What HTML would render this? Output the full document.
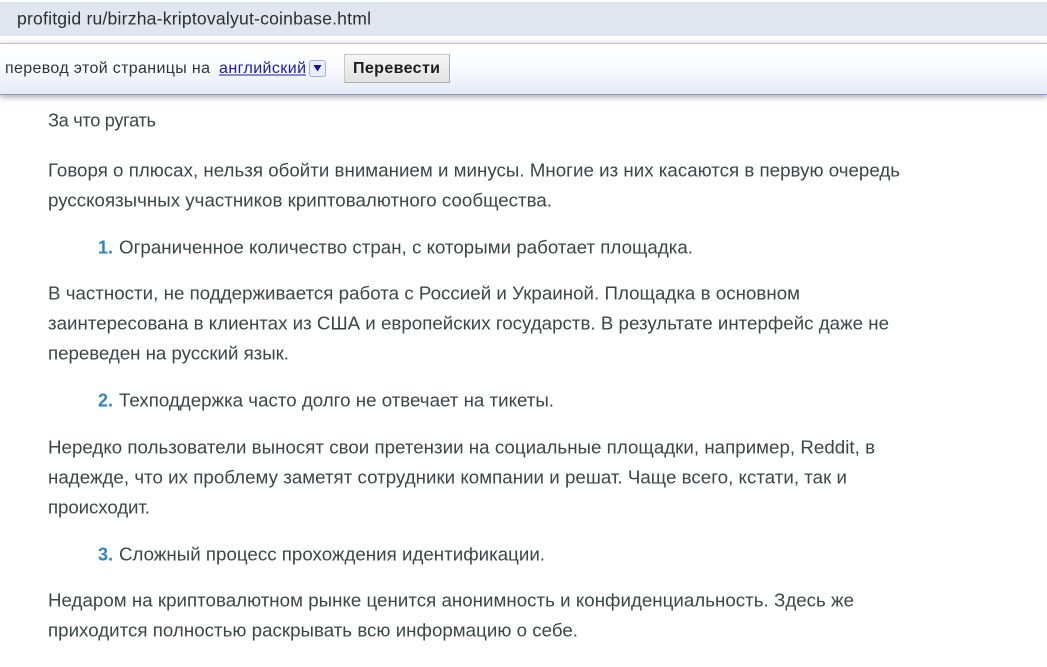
<!DOCTYPE html>
<html lang="ru">
<head>
<meta charset="utf-8">
<title>profitgid</title>
<style>
html,body{margin:0;padding:0;background:#fff;}
body{width:1047px;height:667px;overflow:hidden;position:relative;font-family:"Liberation Sans",Arial,sans-serif;}
#addr{position:absolute;left:0;top:2px;width:1047px;height:34px;background:#dfe6f0;}
#bar{position:absolute;left:0;top:43px;width:1047px;height:50px;border-top:1px solid #bcc2d2;border-bottom:1px solid #8f9bbd;box-sizing:content-box;background:linear-gradient(#ffffff 0%,#fbfcfe 40%,#e4ecf8 100%);box-shadow:0 2px 6px rgba(90,90,100,.55);}
#btn{position:absolute;left:344px;top:54px;width:104px;height:27px;background:linear-gradient(#f6f6f6,#e2e2e2);border:1px solid #c8c8c8;border-right-color:#a9adb5;border-bottom-color:#a9adb5;}
#arrow{position:absolute;left:309px;top:60px;width:15px;height:15px;background:#e8eefb;border:1px solid #9db1d8;border-radius:3px;}
svg{position:absolute;left:0;top:0;filter:blur(.3px);}
text{font-family:"Liberation Sans",Arial,sans-serif;fill:#3f4447;font-size:18.7px;}
.u{fill:#2b2f33;font-size:17.6px;}
.t{fill:#333;font-size:16px;}
.l{fill:#1c1cb4;font-size:16px;}
.b{fill:#1d1d1d;font-size:16px;font-weight:bold;}
.n{fill:#2e86c1;font-weight:bold;font-size:18px;}
.s{font-size:18.2px;}
</style>
</head>
<body>
<div id="addr"></div>
<div id="bar"></div>
<div id="btn"></div>
<div id="arrow"></div>
<svg width="1047" height="667" viewBox="0 0 1047 667" xmlns="http://www.w3.org/2000/svg">
<text class="u" x="17" y="24.500" textLength="354" lengthAdjust="spacing">profitgid ru/birzha-kriptovalyut-coinbase.html</text>
<text class="t" x="5" y="73" textLength="205" lengthAdjust="spacing">перевод этой страницы на</text>
<text class="l" x="219" y="73" textLength="87" lengthAdjust="spacing">английский</text>
<rect x="219" y="74.500" width="87" height="1" fill="#1c1cb4"/>
<path d="M313.500 65h8l-4 6.500z" fill="#10109a"/>
<text class="b" x="353" y="73" textLength="87" lengthAdjust="spacing">Перевести</text>

<text class="s" x="48" y="126.500" textLength="108" lengthAdjust="spacing">За что ругать</text>
<text x="48" y="176.500" textLength="852" lengthAdjust="spacing">Говоря о плюсах, нельзя обойти вниманием и минусы. Многие из них касаются в первую очередь</text>
<text x="48" y="206.500" textLength="504" lengthAdjust="spacing">русскоязычных участников криптовалютного сообщества.</text>

<text class="n" x="98" y="253.500" textLength="15" lengthAdjust="spacing">1.</text>
<text x="119" y="253.500" textLength="574" lengthAdjust="spacing">Ограниченное количество стран, с которыми работает площадка.</text>

<text x="48" y="299.500" textLength="752" lengthAdjust="spacing">В частности, не поддерживается работа с Россией и Украиной. Площадка в основном</text>
<text x="48" y="329.500" textLength="841" lengthAdjust="spacing">заинтересована в клиентах из США и европейских государств. В результате интерфейс даже не</text>
<text x="48" y="359.500" textLength="241" lengthAdjust="spacing">переведен на русский язык.</text>

<text class="n" x="98" y="406.500" textLength="15" lengthAdjust="spacing">2.</text>
<text x="119" y="406.500" textLength="435" lengthAdjust="spacing">Техподдержка часто долго не отвечает на тикеты.</text>

<text x="48" y="453.500" textLength="827" lengthAdjust="spacing">Нередко пользователи выносят свои претензии на социальные площадки, например, Reddit, в</text>
<text x="48" y="483.500" textLength="799" lengthAdjust="spacing">надежде, что их проблему заметят сотрудники компании и решат. Чаще всего, кстати, так и</text>
<text x="48" y="513.500" textLength="102" lengthAdjust="spacing">происходит.</text>

<text class="n" x="98" y="560.500" textLength="15" lengthAdjust="spacing">3.</text>
<text x="119" y="560.500" textLength="426" lengthAdjust="spacing">Сложный процесс прохождения идентификации.</text>

<text x="48" y="606.500" textLength="806" lengthAdjust="spacing">Недаром на криптовалютном рынке ценится анонимность и конфиденциальность. Здесь же</text>
<text x="48" y="636.500" textLength="530" lengthAdjust="spacing">приходится полностью раскрывать всю информацию о себе.</text>
</svg>
</body>
</html>
